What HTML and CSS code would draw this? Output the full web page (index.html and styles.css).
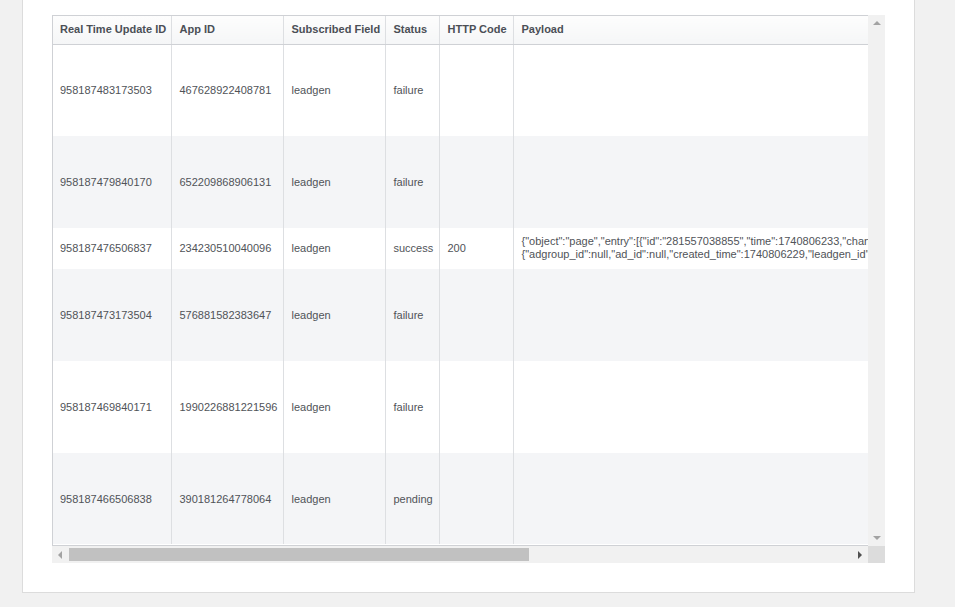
FILE: index.html
```html
<!DOCTYPE html>
<html>
<head>
<meta charset="utf-8">
<link rel="stylesheet" href="styles.css">
</head>
<body>
<div class="panel">
  <div class="grid-wrap">
    <div class="viewport">
      <table class="data">
        <colgroup>
          <col class="c1"><col class="c2"><col class="c3"><col class="c4"><col class="c5"><col class="c6">
        </colgroup>
        <thead>
          <tr>
            <th>Real Time Update ID</th>
            <th>App ID</th>
            <th>Subscribed Field</th>
            <th>Status</th>
            <th>HTTP Code</th>
            <th>Payload</th>
          </tr>
        </thead>
        <tbody>
          <tr class="tall">
            <td>958187483173503</td><td>467628922408781</td><td>leadgen</td><td>failure</td><td></td><td></td>
          </tr>
          <tr class="tall alt">
            <td>958187479840170</td><td>652209868906131</td><td>leadgen</td><td>failure</td><td></td><td></td>
          </tr>
          <tr class="short">
            <td>958187476506837</td><td>234230510040096</td><td>leadgen</td><td>success</td><td>200</td>
            <td class="payload">{"object":"page","entry":[{"id":"281557038855","time":1740806233,"changes":[{"value":<br>{"adgroup_id":null,"ad_id":null,"created_time":1740806229,"leadgen_id":"</td>
          </tr>
          <tr class="tall alt">
            <td>958187473173504</td><td>576881582383647</td><td>leadgen</td><td>failure</td><td></td><td></td>
          </tr>
          <tr class="tall">
            <td>958187469840171</td><td>1990226881221596</td><td>leadgen</td><td>failure</td><td></td><td></td>
          </tr>
          <tr class="tall alt last">
            <td>958187466506838</td><td>390181264778064</td><td>leadgen</td><td>pending</td><td></td><td></td>
          </tr>
        </tbody>
      </table>
    </div>
    <div class="vscroll">
      <span class="arrow up"></span>
      <span class="arrow down"></span>
    </div>
    <div class="hscroll">
      <span class="arrow left"></span>
      <span class="thumb"></span>
      <span class="arrow right"></span>
    </div>
    <div class="corner"></div>
  </div>
</div>
</body>
</html>
```

FILE: styles.css
```css
* { box-sizing: border-box; }
html, body {
  margin: 0;
  padding: 0;
  background: #f1f1f1;
  font-family: "Liberation Sans", Arial, sans-serif;
  height: 607px;
  overflow: hidden;
}
.panel {
  margin-left: 22px;
  width: 893px;
  background: #fff;
  border: 1px solid #dcdcdc;
  border-top: none;
  padding: 15px 29px 29px 29px;
}
.grid-wrap {
  display: grid;
  grid-template-columns: 816px 17px;
  grid-template-rows: 531px 17px;
  width: 833px;
}
.viewport {
  overflow: hidden;
  border-top: 1px solid #cfd1d5;
  border-left: 1px solid #cfd1d5;
  border-bottom: 1px solid #cfd1d5;
  background: #fff;
}
.data {
  border-collapse: collapse;
  table-layout: fixed;
  width: 1200px;
  font-size: 11px;
  color: #505358;
}
.c1 { width: 118px; }
.c2 { width: 112px; }
.c3 { width: 102px; }
.c4 { width: 54px; }
.c5 { width: 74px; }
.c6 { width: 740px; }
.data th {
  height: 28px;
  text-align: left;
  font-weight: bold;
  color: #4b4f56;
  padding: 0 7px 1px 8px;
  background: linear-gradient(#fdfdfd, #f5f6f7);
  border-right: 1px solid #dddfe2;
  border-bottom: 1px solid #cfd1d5;
  white-space: nowrap;
}
.data td {
  padding: 0 7px 0 8px;
  border-right: 1px solid #dddfe2;
  white-space: nowrap;
  overflow: hidden;
  vertical-align: middle;
}
.data th:first-child, .data td:first-child { padding-left: 7px; }
.data tr.tall td { height: 92px; }
.data tr.short td { height: 41px; padding-bottom: 1px; }
.data tr.last td { height: 91px; }
.data tr.alt td { background: #f4f5f7; }
.payload {
  line-height: 13px;
}
.vscroll {
  background: #f1f1f1;
  position: relative;
}
.hscroll {
  background: #f1f1f1;
  position: relative;
}
.corner { background: #dcdcdc; }
.thumb {
  position: absolute;
  left: 17px;
  top: 2px;
  width: 460px;
  height: 13px;
  background: #c1c1c1;
}
.arrow {
  position: absolute;
  width: 0;
  height: 0;
  border-style: solid;
}
.arrow.up {
  left: 5px;
  top: 6px;
  border-width: 0 4px 4px 4px;
  border-color: transparent transparent #a3a3a3 transparent;
}
.arrow.down {
  left: 5px;
  bottom: 6px;
  border-width: 4px 4px 0 4px;
  border-color: #a3a3a3 transparent transparent transparent;
}
.arrow.left {
  left: 6px;
  top: 5px;
  border-width: 4px 4px 4px 0;
  border-color: transparent #a3a3a3 transparent transparent;
}
.arrow.right {
  right: 6px;
  top: 5px;
  border-width: 4px 0 4px 4px;
  border-color: transparent transparent transparent #505050;
}
```
